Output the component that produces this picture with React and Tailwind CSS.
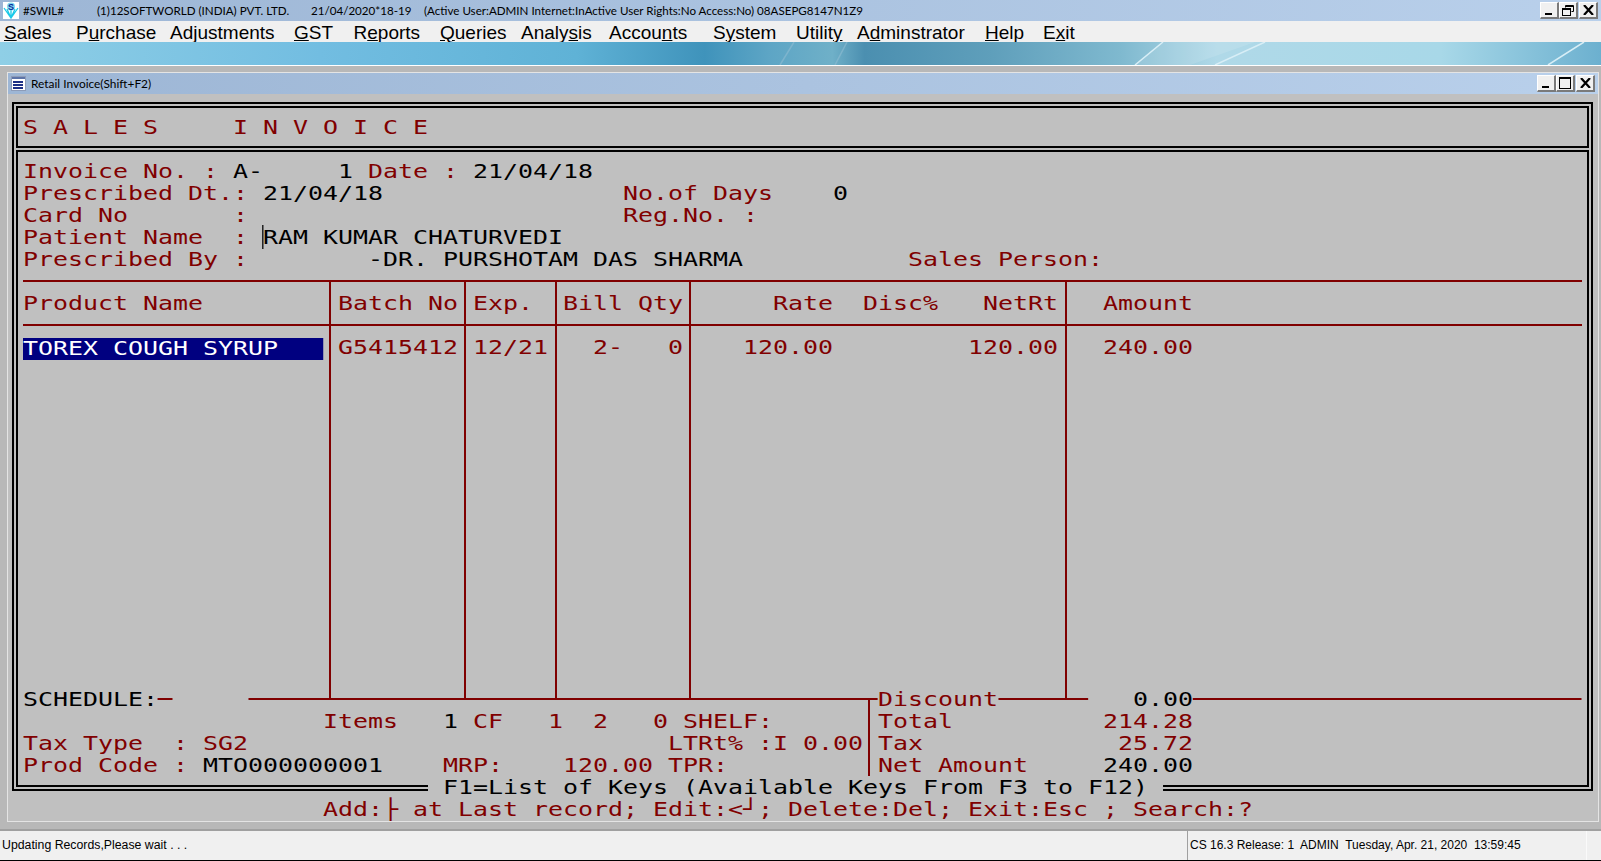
import React from "react";

const menus = [
  ["w-[72px]", "", "S", "ales"],
  ["w-[94px]", "P", "u", "rchase"],
  ["w-[124px]", "Ad", "j", "ustments"],
  ["w-[59.5px]", "", "G", "ST"],
  ["w-[86.5px]", "R", "e", "ports"],
  ["w-[81px]", "", "Q", "ueries"],
  ["w-[88px]", "Analy", "s", "is"],
  ["w-[104px]", "Accou", "n", "ts"],
  ["w-[83px]", "S", "y", "stem"],
  ["w-[61px]", "Utilit", "y", ""],
  ["w-[128px]", "A", "d", "minstrator"],
  ["w-[58px]", "", "H", "elp"],
  ["w-[40px]", "E", "x", "it"],
];

// one line of the DOS style screen, 15px per character
function R({ children, className = "" }) {
  return (
    <div className={`h-[22.08px] leading-[22.08px] whitespace-pre origin-left scale-x-[1.2458] ${className}`}>
      {children}
    </div>
  );
}

const K = ({ children }) => <span className="text-black">{children}</span>;

function WinButton({ children, className = "" }) {
  return (
    <div className={`h-[17px] w-[19px] flex items-center justify-center bg-[#f0f0f0] border-t border-l border-t-white border-l-white border-r-2 border-b-2 border-r-[#7a7a7a] border-b-[#7a7a7a] ${className}`}>
      {children}
    </div>
  );
}

const MinIcon = () => (
  <svg width="11" height="11" viewBox="0 0 11 11">
    <rect x="1" y="8" width="7" height="2" fill="#000" />
  </svg>
);

const RestoreIcon = () => (
  <svg width="12" height="11" viewBox="0 0 12 11" fill="none" stroke="#000">
    <path d="M3.5 2.5V.5h8v6h-2" />
    <path d="M3 1.5h8" strokeWidth="1" />
    <rect x=".5" y="3.5" width="8" height="7" fill="#f0f0f0" />
    <path d="M1 4.5h7" />
  </svg>
);

const MaxIcon = () => (
  <svg width="12" height="12" viewBox="0 0 12 12" fill="none" stroke="#000">
    <rect x=".5" y=".5" width="11" height="11" />
    <path d="M0 1.5h12" />
  </svg>
);

const CloseIcon = () => (
  <svg width="11" height="10" viewBox="0 0 11 10" fill="none" stroke="#000" strokeWidth="2.2">
    <path d="M1 0l9 10M10 0L1 10" />
  </svg>
);

const Logo = () => (
  <svg width="16" height="17" viewBox="0 0 16 17" className="ml-[3px] shrink-0">
    <rect width="16" height="17" fill="#fff" />
    <path d="M1 6l7 10 7-10M4 7l4 9 4-9M8 8v8" fill="none" stroke="#19c9e8" strokeWidth="1.3" />
    <circle cx="8" cy="4.5" r="4" fill="#7fd8ee" />
    <text x="8" y="8" textAnchor="middle" fontSize="9" fontWeight="700" fill="#0a2a9c" fontFamily="Liberation Sans">S</text>
  </svg>
);

const DocIcon = () => (
  <svg width="15" height="15" viewBox="0 0 15 15" className="ml-[3px] shrink-0">
    <rect x=".5" y=".5" width="14" height="14" fill="#fff" stroke="#8d9cb8" />
    <rect x="1" y="1" width="13" height="2" fill="#5c74a8" />
    <rect x="2" y="5" width="10" height="2" fill="#1b2f86" />
    <rect x="2" y="8" width="10" height="2" fill="#1b2f86" />
    <rect x="2" y="11" width="10" height="2" fill="#1b2f86" />
  </svg>
);

export default function App() {
  return (
    <div className="w-[1601px] h-[861px] overflow-hidden flex flex-col bg-[#c0c0c0] text-black">
      {/* main title bar */}
      <div className="h-[21px] shrink-0 flex items-center bg-gradient-to-r from-[#9db6d5] to-[#b9d0eb] font-['Lato'] text-[11.6px] whitespace-pre">
        <Logo />
        <span className="w-[78px] pl-[4px]">#SWIL#</span>
        <span className="w-[214px]">(1)12SOFTWORLD (INDIA) PVT. LTD.</span>
        <span className="w-[113px]">21/04/2020*18-19</span>
        <span>(Active User:ADMIN Internet:InActive User Rights:No Access:No) 08ASEPG8147N1Z9</span>
        <div className="ml-auto mr-[3px] flex">
          <WinButton><MinIcon /></WinButton>
          <WinButton><RestoreIcon /></WinButton>
          <WinButton className="ml-[1px]"><CloseIcon /></WinButton>
        </div>
      </div>

      {/* menu */}
      <div className="h-[21px] shrink-0 flex items-center pl-[4px] pt-[1px] bg-[#f0f0f0] font-['Liberation_Sans'] text-[19px] leading-[21px]">
        {menus.map(([w, a, u, b]) => (
          <span key={a + u + b} className={w}>
            {a}<u>{u}</u>{b}
          </span>
        ))}
      </div>

      {/* wallpaper strip */}
      <div className="relative h-[23px] shrink-0 overflow-hidden bg-[linear-gradient(90deg,#8fcfe6_0%,#72bde1_20%,#5fb2d6_36%,#3f93bb_44%,#5da5c5_48%,#6fb0c8_52%,#4b8fb0_54%,#5f9fbb_62%,#7fb9cf_70%,#b0d9e8_76%,#a8d8e8_90%,#6cb0cf_100%)]">
        <svg width="1601" height="23" className="absolute inset-0">
          <path d="M1135 23l28-23h92l-65 23z" fill="#fff" fillOpacity="0.12" />
          <path d="M1135 23l28-23M1215 23l50-23M1548 23l36-23" fill="none" stroke="#d8eef6" strokeWidth="1.5" />
          <path d="M780 23l14-23M835 23l12-23" fill="none" stroke="#8fbdd2" strokeOpacity="0.6" strokeWidth="1.5" />
        </svg>
      </div>

      {/* child window */}
      <div className="h-[764px] shrink-0 flex flex-col pt-[6px] pl-[7px] pr-[2px] border-t border-white bg-[#b8b8b8]">
        <div className="h-[750px] flex flex-col border border-[#e4e4e4] bg-[#c0c0c0]">
          <div className="h-[21px] shrink-0 flex items-center bg-gradient-to-r from-[#9db6d5] to-[#b9d0eb] font-['Lato'] text-[11.9px]">
            <DocIcon />
            <span className="ml-[5px] mt-[1px]">Retail Invoice(Shift+F2)</span>
            <div className="ml-auto mr-[3px] flex">
              <WinButton><MinIcon /></WinButton>
              <WinButton><MaxIcon /></WinButton>
              <WinButton className="ml-[1px]"><CloseIcon /></WinButton>
            </div>
          </div>

          <div className="flex-1 pt-[8px] pl-[4px] font-['DejaVu_Sans_Mono'] text-[20px] text-[#800000]">
            <div className="w-[1581px] h-[689px] flex flex-col gap-[2px] border-2 border-black p-[2px]">
              <div className="h-[42px] shrink-0 flex items-center pl-[5px] border-2 border-black">
                <R>{"S A L E S     I N V O I C E"}</R>
              </div>

              <div className="flex-1 flex flex-col pt-[7.5px] pl-[5px] pr-[3px] border-2 border-black">
                <R>{"Invoice No. : "}<K>{"A-     1"}</K>{" Date : "}<K>21/04/18</K></R>
                <R>{"Prescribed Dt.: "}<K>21/04/18</K>{"                No.of Days    "}<K>0</K></R>
                <R>{"Card No       :                         Reg.No. :"}</R>
                <R>{"Patient Name  : "}<span className="border-l border-black -ml-px text-black">RAM KUMAR CHATURVEDI</span></R>
                <R>{"Prescribed By :        "}<K>-DR. PURSHOTAM DAS SHARMA</K>{"           Sales Person:"}</R>

                <div className="h-[2px] shrink-0 mt-[10px] mr-[2px] bg-[#800000]" />

                {/* item table */}
                <div className="h-[417px] shrink-0 mr-[2px] grid grid-cols-[308px_135px_91px_134px_376px_1fr]">
                  <div className="border-r-2 border-[#800000]">
                    <div className="h-[44px] pt-[10px] border-b-2 border-[#800000]"><R>Product Name</R></div>
                    <div className="pt-[11px]"><R><span className="inline-block h-[22px] leading-[20px] bg-[#000080] text-white">{"TOREX COUGH SYRUP   "}</span></R></div>
                  </div>
                  <div className="border-r-2 border-[#800000]">
                    <div className="h-[44px] pt-[10px] pl-[7px] border-b-2 border-[#800000]"><R>Batch No</R></div>
                    <div className="pt-[10px] pl-[7px]"><R>G5415412</R></div>
                  </div>
                  <div className="border-r-2 border-[#800000]">
                    <div className="h-[44px] pt-[10px] pl-[7px] border-b-2 border-[#800000]"><R>Exp.</R></div>
                    <div className="pt-[10px] pl-[7px]"><R>12/21</R></div>
                  </div>
                  <div className="border-r-2 border-[#800000]">
                    <div className="h-[44px] pt-[10px] pl-[6px] border-b-2 border-[#800000]"><R>Bill Qty</R></div>
                    <div className="pt-[10px] pl-[6px]"><R>{"  2-   0"}</R></div>
                  </div>
                  <div className="border-r-2 border-[#800000]">
                    <div className="h-[44px] pt-[10px] pl-[7px] border-b-2 border-[#800000]"><R>{"     Rate  Disc%   NetRt"}</R></div>
                    <div className="pt-[10px] pl-[7px]"><R>{"   120.00         120.00"}</R></div>
                  </div>
                  <div>
                    <div className="h-[44px] pt-[10px] pl-[36px] border-b-2 border-[#800000]"><R>Amount</R></div>
                    <div className="pt-[10px] pl-[36px]"><R>240.00</R></div>
                  </div>
                </div>

                {/* totals */}
                <R className="-mt-[11px] flex items-center">
                  <K>SCHEDULE:</K>
                  <span className="w-[1ch] h-[2px] bg-[#800000]" />
                  <span className="w-[5ch]" />
                  <span className="w-[42ch] h-[2px] bg-[#800000]" />
                  <span>Discount</span>
                  <span className="w-[6ch] h-[2px] bg-[#800000]" />
                  <span className="w-[3ch]" />
                  <K>0.00</K>
                  <span className="w-[25.9ch] h-[2px] bg-[#800000]" />
                </R>
                <div className="flex">
                  <div className="w-[845px] shrink-0">
                    <R>{"                    Items   "}<K>1</K>{" CF   1  2   0 SHELF:"}</R>
                    <R>{"Tax Type  : SG2                            LTRt% :I 0.00"}</R>
                    <R>{"Prod Code : "}<K>MTO000000001</K>{"    MRP:    120.00 TPR:"}</R>
                  </div>
                  <div className="-mt-[11px] pt-[11px] pl-[8px] border-l-2 border-[#800000]">
                    <R>{"Total          214.28"}</R>
                    <R>{"Tax             25.72"}</R>
                    <R>{"Net Amount     "}<K>240.00</K></R>
                  </div>
                </div>
              </div>
            </div>

            {/* key help, sits on the frame's bottom edge */}
            <R className="-mt-[15px] ml-[416px]">
              <span className="inline-block h-[22px] leading-[22px] bg-[#c0c0c0] text-black">{" F1=List of Keys (Available Keys From F3 to F12) "}</span>
            </R>
            <R className="ml-[311px]">{"Add:├ at Last record; Edit:<┘; Delete:Del; Exit:Esc ; Search:?"}</R>
          </div>
        </div>
      </div>

      {/* status bar */}
      <div className="h-[32px] shrink-0 flex border-t-2 border-b border-t-[#a0a0a0] border-b-black bg-[#f0f0f0] font-['Liberation_Sans'] text-[12.3px] leading-[29px]">
        <div className="w-[1188px] pl-[2px] border-r border-[#a0a0a0]">Updating Records,Please wait . . .</div>
        <div className="w-[399px] pl-[2px] text-[12px] whitespace-pre border-r border-[#fafafa]">CS 16.3 Release: 1  ADMIN  Tuesday, Apr. 21, 2020  13:59:45</div>
      </div>
    </div>
  );
}
